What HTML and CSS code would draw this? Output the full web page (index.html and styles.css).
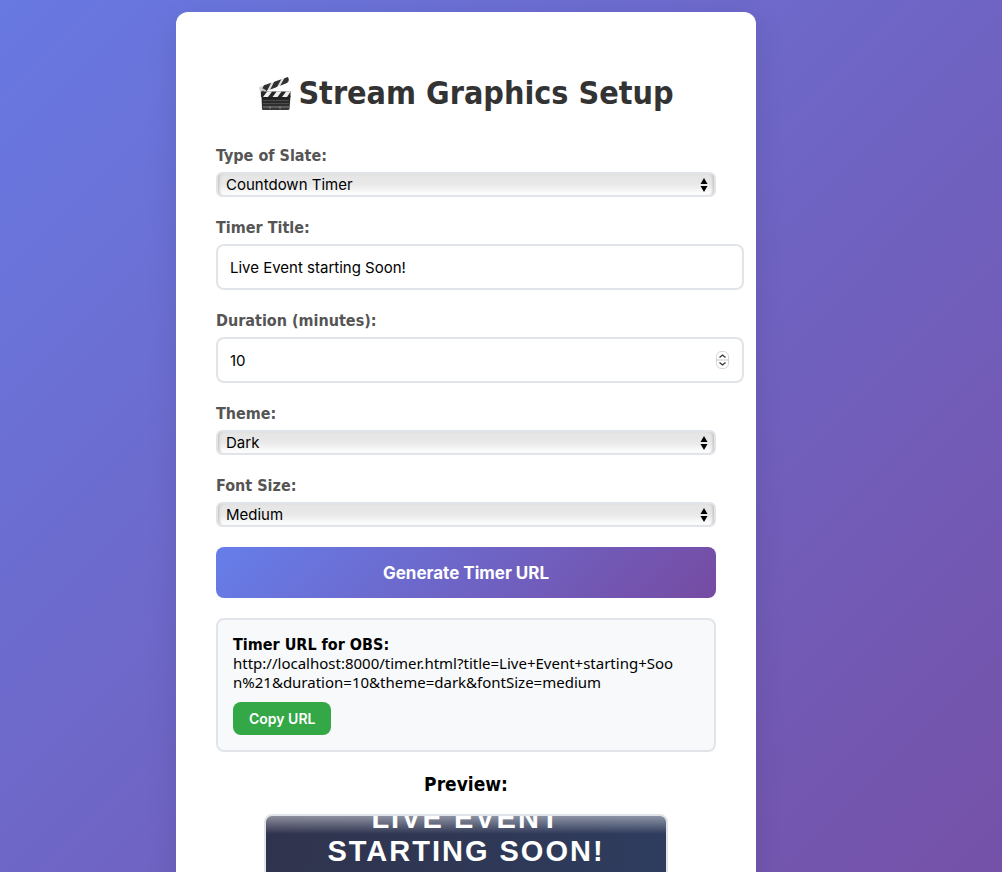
FILE: index.html
```html
<!DOCTYPE html>
<html lang="en">
<head>
<meta charset="utf-8">
<meta name="viewport" content="width=device-width, initial-scale=1">
<title>Stream Graphics Setup</title>
<link rel="stylesheet" href="styles.css">
</head>
<body>
<main class="page">
  <div class="card">
    <h1 class="title">
      <svg class="clapper" viewBox="0 0 34 34" aria-hidden="true">
        <defs>
          <linearGradient id="slate" x1="0" y1="0" x2="0" y2="1"><stop offset="0" stop-color="#1c1c1c"/><stop offset="1" stop-color="#3a3a3a"/></linearGradient>
          <clipPath id="arm"><path d="M1 10 30 0 31.500 5 5 15.500Z"/></clipPath>
          <clipPath id="bar"><path d="M3 14.500H32.500V20H3Z"/></clipPath>
        </defs>
        <g clip-path="url(#arm)">
          <path fill="#e0e0e0" d="M0 0H34V16H0Z"/>
          <path fill="#303030" d="M7 6 14 4 9 14 2 16ZM17 3 24 1 18.500 11 12 13ZM27 0 34 -2 28 8 21.500 10Z"/>
        </g>
        <path fill="#d2d2d2" d="M1 10 6 12 10 15 8 19 3 20Z"/>
        <circle cx="5" cy="14.500" r="1.300" fill="#888"/>
        <path fill="url(#slate)" d="M3.500 19H32.500L31.500 32Q31.300 33 30 33H5Q4 33 4 32Z"/>
        <g clip-path="url(#bar)">
          <path fill="#262626" d="M3 14H33V20H3Z"/>
          <path fill="#eee" d="M5 20 9.500 14H14.500L10 20ZM14.500 20 19 14H24L19.500 20ZM24 20 28.500 14H33L29 20Z"/>
        </g>
        <path stroke="#5c5c5c" stroke-width=".7" d="M5 23.500H31M5 26.500H31"/>
        <path stroke="#999" stroke-width=".8" d="M5 30H31M12 29V32M22 29V32"/>
      </svg>
      <span>Stream Graphics Setup</span>
    </h1>

    <form class="form">
      <div class="group">
        <label class="label" for="slate-type">Type of Slate:</label>
        <div class="select-wrap">
          <select class="select" id="slate-type"><option>Countdown Timer</option></select>
          <svg class="arrows" viewBox="0 0 8 16" aria-hidden="true"><path d="M4 1 7.500 7H.5ZM4 15 .5 9H7.500Z"/></svg>
        </div>
      </div>
      <div class="group">
        <label class="label" for="timer-title">Timer Title:</label>
        <input class="input" id="timer-title" type="text" value="Live Event starting Soon!">
      </div>
      <div class="group">
        <label class="label" for="duration">Duration (minutes):</label>
        <div class="number-wrap">
          <input class="input" id="duration" type="number" value="10" min="1">
          <svg class="stepper" viewBox="0 0 14 20" aria-hidden="true">
            <rect x=".5" y="1.500" width="12" height="17" rx="5" fill="#fff" stroke="#d4d4d4"/>
            <path d="M1 10H12" stroke="#ddd" stroke-width="1.500"/>
            <path d="M3.500 7.500 6.500 5 9.500 7.500M3.500 12.500 6.500 15 9.500 12.500" fill="none" stroke="#333" stroke-width="1.300"/>
          </svg>
        </div>
      </div>
      <div class="group">
        <label class="label" for="theme">Theme:</label>
        <div class="select-wrap">
          <select class="select" id="theme"><option>Dark</option></select>
          <svg class="arrows" viewBox="0 0 8 16" aria-hidden="true"><path d="M4 1 7.500 7H.5ZM4 15 .5 9H7.500Z"/></svg>
        </div>
      </div>
      <div class="group">
        <label class="label" for="font-size">Font Size:</label>
        <div class="select-wrap">
          <select class="select" id="font-size"><option>Medium</option></select>
          <svg class="arrows" viewBox="0 0 8 16" aria-hidden="true"><path d="M4 1 7.500 7H.5ZM4 15 .5 9H7.500Z"/></svg>
        </div>
      </div>
      <button class="generate" type="button">Generate Timer URL</button>
    </form>

    <section class="result">
      <strong>Timer URL for OBS:</strong>
      <div class="url">http://localhost:8000/timer.html?title=Live+Event+starting+Soon%21&amp;duration=10&amp;theme=dark&amp;fontSize=medium</div>
      <button class="copy" type="button">Copy URL</button>
    </section>

    <section class="preview">
      <h3 class="preview-title">Preview:</h3>
      <div class="screen"><p class="screen-text">Live Event starting Soon!</p></div>
    </section>
  </div>
</main>
</body>
</html>
```
FILE: styles.css
```css
body {
  margin: 0;
  background: linear-gradient(135deg, #6879e2 0%, #7551a8 100%);
  font: 16px/19px "DejaVu Sans Condensed", "DejaVu Sans", sans-serif;
  color: #000;
}
.page {
  box-sizing: border-box;
  height: 100vh;
  padding: 12px 70px 0 0;
  overflow-y: auto;
  scrollbar-width: none;
}
.card {
  max-width: 500px;
  margin: 0 auto;
  padding: 40px;
  background: #fff;
  border-radius: 12px;
  box-shadow: 0 10px 30px rgba(0, 0, 0, 0.1);
}
.title {
  display: flex;
  justify-content: center;
  align-items: center;
  gap: 6px;
  margin: 20px 0 30px;
  font-size: 32px;
  line-height: 43px;
  color: #333;
}
.clapper { width: 34px; height: 34px; }
.group { margin-bottom: 20px; }
.label {
  display: block;
  margin-bottom: 6px;
  line-height: 21px;
  font-weight: bold;
  color: #555;
}
.select-wrap { position: relative; display: flex; }
.select {
  appearance: none;
  width: 100%;
  height: 25px;
  padding: 0 24px 1px 8px;
  border: 2px solid #e1e5e9;
  border-radius: 6px;
  background: linear-gradient(#e4e4e4, #e9e9e9 50%, #fff);
  box-shadow: inset 3px 0 3px -2px #bbb, inset -3px 0 3px -2px #bbb;
  font: 15px "Inter", sans-serif;
  color: #000;
}
.arrows {
  position: absolute;
  right: 8px;
  top: 5px;
  width: 8px;
  height: 16px;
  pointer-events: none;
}
.input {
  display: block;
  width: 100%;
  height: 18px;
  padding: 12px;
  border: 2px solid #e1e5e9;
  border-radius: 8px;
  background: #fff;
  font: 15px "Inter", sans-serif;
  color: #000;
  appearance: textfield;
}
.number-wrap { position: relative; }
.stepper {
  position: absolute;
  right: -14px;
  top: 13px;
  width: 14px;
  height: 20px;
  pointer-events: none;
}
.generate {
  width: 100%;
  height: 51px;
  border: 0;
  border-radius: 8px;
  background: linear-gradient(135deg, #667eea 0%, #764ba2 100%);
  font: 700 17px "Inter", sans-serif;
  color: #fff;
}
.result {
  margin-top: 20px;
  padding: 15px;
  border: 2px solid #e1e5e9;
  border-radius: 8px;
  background: #f8f9fa;
  word-break: break-all;
}
.url {
  padding-right: 16px;
  font-family: "Noto Sans", sans-serif;
  font-size: 15px;
}
.copy {
  display: block;
  height: 33px;
  margin-top: 10px;
  padding: 0 16px;
  border: 0;
  border-radius: 8px;
  background: #34a747;
  font: 600 14px "Inter", sans-serif;
  color: #fff;
}
.preview { margin-top: 20px; text-align: center; }
.preview-title {
  margin: 0 0 17px;
  font-size: 19px;
  line-height: 25px;
}
.screen {
  display: flex;
  justify-content: center;
  max-width: 400px;
  height: 225px;
  margin: 0 auto;
  overflow: hidden;
  border: 2px solid #e1e5e9;
  border-radius: 8px;
  background: linear-gradient(rgba(255, 255, 255, 0.45), rgba(255, 255, 255, 0) 18px), linear-gradient(100deg, #30334d, #2e3d5f);
}
.screen-text {
  max-width: 320px;
  margin: -14px 0 0;
  font: bold 29px/33px "Liberation Sans", sans-serif;
  letter-spacing: 2px;
  text-transform: uppercase;
  color: #fff;
}
```
